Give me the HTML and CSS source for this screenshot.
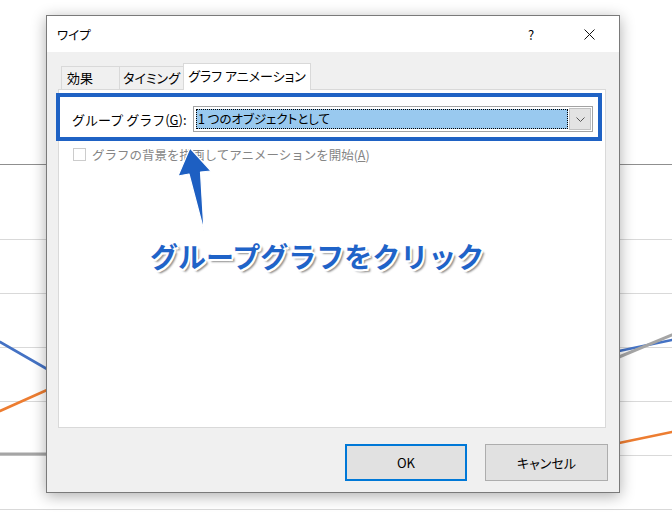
FILE: index.html
```html
<!DOCTYPE html>
<html lang="ja">
<head>
<meta charset="utf-8">
<title>ワイプ</title>
<link rel="stylesheet" href="styles.css">
</head>
<body>
<div class="desk">
  <svg class="chart" width="672" height="513" viewBox="0 0 672 513">
    <g stroke="#d9d9d9" stroke-width="1">
      <line x1="0" y1="239.5" x2="672" y2="239.5"/>
      <line x1="0" y1="293.5" x2="672" y2="293.5"/>
      <line x1="0" y1="347.5" x2="672" y2="347.5"/>
      <line x1="0" y1="401.5" x2="672" y2="401.5"/>
      <line x1="0" y1="455.5" x2="672" y2="455.5"/>
      <line x1="0" y1="509.5" x2="672" y2="509.5"/>
    </g>
    <line x1="0" y1="164.5" x2="672" y2="164.5" stroke="#8f8f8f" stroke-width="1"/>
    <g stroke-width="2.6" fill="none" stroke-linecap="round">
      <line x1="0" y1="342" x2="47" y2="369" stroke="#4472c4"/>
      <line x1="0" y1="411" x2="47" y2="390" stroke="#ed7d31"/>
      <line x1="0" y1="454" x2="47" y2="454" stroke="#a5a5a5" stroke-width="3"/>
      <line x1="619" y1="351" x2="672" y2="340" stroke="#4472c4"/>
      <line x1="619" y1="357" x2="672" y2="335" stroke="#a5a5a5" stroke-width="3"/>
      <line x1="619" y1="443" x2="672" y2="432" stroke="#ed7d31"/>
    </g>
  </svg>

  <div class="dialog">
    <div class="titlebar">
      <span class="title">ワイプ</span>
      <span class="help">?</span>
      <span class="close">
        <svg width="11" height="11" viewBox="0 0 11 11"><path d="M0.5 0.5L10.5 10.5M10.5 0.5L0.5 10.5" stroke="#111" stroke-width="1"/></svg>
      </span>
    </div>
    <div class="body">
      <div class="tabs">
        <div class="tab tab-effect">効果</div>
        <div class="tab tab-timing">タイミング</div>
        <div class="tab tab-graph active">グラフ アニメーション</div>
      </div>
      <div class="panel">
        <div class="highlight">
          <span class="lbl">グループ グラフ(<u>G</u>):</span>
          <div class="combo">
            <div class="sel">1 つのオブジェクトとして</div>
            <div class="drop">
              <svg width="9" height="5" viewBox="0 0 9 5"><path d="M0.5 0.5L4.5 4.5L8.5 0.5" stroke="#555" stroke-width="1" fill="none"/></svg>
            </div>
          </div>
        </div>
        <div class="check">
          <span class="box"></span>
          <span class="check-text">グラフの背景を描画してアニメーションを開始(<u>A</u>)</span>
        </div>
      </div>
      <div class="buttons">
        <button class="btn btn-ok">OK</button>
        <button class="btn btn-cancel">キャンセル</button>
      </div>
    </div>
  </div>

  <svg class="arrow" width="50" height="100" viewBox="0 0 50 100">
    <path d="M20 8 L41 31 L30.5 32 L34 91 L19 34 L8 36 Z" fill="#1d5fc2" stroke="#ffffff" stroke-width="1.2" stroke-linejoin="round"/>
  </svg>
  <div class="callout">グループグラフをクリック</div>
</div>
</body>
</html>
```

FILE: styles.css
```css
* { box-sizing: border-box; }
html, body { margin: 0; padding: 0; }
body {
  width: 672px;
  height: 513px;
  overflow: hidden;
  background: #ffffff;
  font-family: "Noto Sans CJK JP", "Noto Sans", sans-serif;
  color: #000;
}
.desk { position: relative; width: 672px; height: 513px; }
.chart { position: absolute; left: 0; top: 0; }

.dialog {
  position: absolute;
  left: 46px;
  top: 15px;
  width: 574px;
  height: 478px;
  border: 1px solid #7a7a7a;
  background: #f0f0f0;
  box-shadow: 0 3px 14px rgba(0, 0, 0, 0.32);
  display: flex;
  flex-direction: column;
}
.titlebar {
  height: 36px;
  background: #ffffff;
  display: flex;
  align-items: center;
  padding-left: 10px;
  font-size: 12.5px;
  font-feature-settings: "palt";
}
.title { flex: 1; }
.help {
  width: 30px;
  text-align: center;
  font-size: 13px;
  margin-right: 28px;
}
.close {
  width: 30px;
  margin-right: 15px;
  display: flex;
  justify-content: center;
  align-items: center;
}

.body {
  flex: 1;
  padding: 11px 11px 11px 11px;
  display: flex;
  flex-direction: column;
}
.tabs {
  height: 26px;
  display: flex;
  align-items: flex-end;
  padding-left: 3px;
  position: relative;
  z-index: 1;
  font-feature-settings: "palt";
}
.tab {
  height: 23px;
  border: 1px solid #d9d9d9;
  border-bottom: none;
  background: #f0f0f0;
  font-size: 13px;
  line-height: 21px;
  text-align: center;
  margin-right: -1px;
}
.tab-effect { width: 59px; text-align: left; padding-left: 5px; }
.tab-timing { width: 65px; }
.tab-graph { width: 128px; }
.tab.active {
  height: 27px;
  margin-bottom: -1px;
  background: #ffffff;
  line-height: 24px;
}

.panel {
  height: 339px;
  margin-right: 2px;
  border: 1px solid #d9d9d9;
  background: #ffffff;
  display: flex;
  flex-direction: column;
}
.highlight {
  width: 546px;
  height: 48px;
  margin: 3px 0 0 -3px;
  border: 4px solid #1f62c4;
  background: #ffffff;
  display: flex;
  align-items: center;
  padding: 4px 5px 0 12px;
}
.lbl { font-size: 13px; white-space: nowrap; }
.combo {
  margin-left: auto;
  width: 400px;
  height: 26px;
  border: 1px solid #a3a3a3;
  background: #ffffff;
  padding: 2px 1px 2px 2px;
  display: flex;
}
.sel {
  flex: 1;
  background: #99c9ef;
  border: 1px dotted #000;
  font-size: 12.5px;
  font-feature-settings: "palt";
  line-height: 18px;
  padding-left: 1px;
}
.drop {
  width: 22px;
  margin-left: 1px;
  margin-top: -1px;
  margin-bottom: -1px;
  background: #e3e3e3;
  border: 1px solid #c2c2c2;
  display: flex;
  justify-content: center;
  align-items: center;
}

.check {
  display: flex;
  align-items: center;
  margin: 6px 0 0 14px;
  height: 14px;
}
.box {
  width: 13px;
  height: 13px;
  border: 1px solid #cccccc;
  background: #ffffff;
}
.check-text {
  margin-left: 6px;
  font-size: 12.5px;
  color: #858585;
}

.buttons {
  margin-top: 16px;
  display: flex;
  justify-content: flex-end;
  gap: 18px;
}
.btn {
  height: 37px;
  background: #e1e1e1;
  border: 1px solid #adadad;
  font-family: "Noto Sans CJK JP", "Noto Sans", sans-serif;
  font-feature-settings: "palt";
  font-size: 13px;
  color: #000;
  padding: 0;
}
.btn-ok { width: 122px; border: 2px solid #0078d7; }
.btn-cancel { width: 123px; }

.arrow { position: absolute; left: 170px; top: 140px; }
.callout {
  position: absolute;
  left: 150px;
  top: 240px;
  font-size: 28px;
  line-height: 32px;
  font-weight: 700;
  color: #1f63c8;
  white-space: nowrap;
  text-shadow:
    2px 0 0 #fff, -2px 0 0 #fff, 0 2px 0 #fff, 0 -2px 0 #fff,
    1.5px 1.5px 0 #fff, -1.5px 1.5px 0 #fff, 1.5px -1.5px 0 #fff, -1.5px -1.5px 0 #fff,
    3px 3px 2px rgba(0, 0, 0, 0.45);
}
```
